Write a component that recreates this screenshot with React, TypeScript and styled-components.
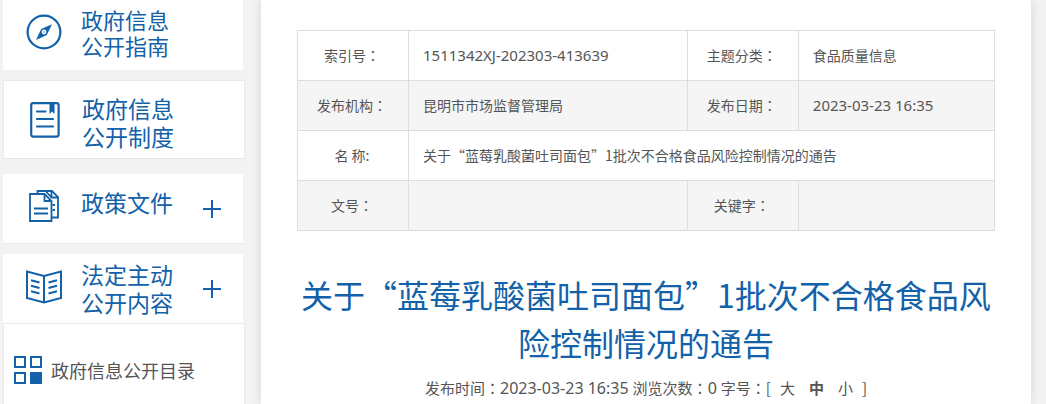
import React from "react";
import styled, { createGlobalStyle } from "styled-components";

const BLUE = "#1261a9";

const GlobalStyle = createGlobalStyle`
  * { box-sizing: border-box; }
  body {
    margin: 0;
    background: #f3f3f3;
    color: #555;
    font-family: "Noto Sans CJK SC", "Noto Sans", sans-serif;
    font-size: 14px;
  }
`;

const Page = styled.div`
  display: flex;
  gap: 16px;
  min-height: 100vh;
  padding: 0 15px 0 3px;
`;

const Sidebar = styled.nav`
  display: flex;
  flex-direction: column;
  flex: 0 0 242px;
`;

const cardStyles = `
  display: grid;
  grid-template-columns: 78px 1fr 40px;
  align-items: center;
  width: 240px;
  border: 0;
  background: #fff;
  color: ${BLUE};
  font-family: inherit;
  text-align: left;
  text-decoration: none;
  padding: 0;
  cursor: pointer;
`;

const CardLink = styled.a<{ $outlined?: boolean }>`
  ${cardStyles}
  height: ${(p) => (p.$outlined ? 79 : 70)}px;
  width: ${(p) => (p.$outlined ? 242 : 240)}px;
  margin-bottom: ${(p) => (p.$outlined ? 15 : 10)}px;
  padding-bottom: ${(p) => (p.$outlined ? 0 : 6)}px;
  border: ${(p) => (p.$outlined ? "1px solid #e8e8e8" : "0")};
`;

const CardButton = styled.button<{ $last?: boolean }>`
  ${cardStyles}
  height: 70px;
  margin-bottom: ${(p) => (p.$last ? 0 : 10)}px;
  border-bottom: 1px solid #e8e8e8;
`;

const IconBox = styled.span<{ $raise?: number }>`
  display: flex;
  justify-content: center;
  padding: 0 4px ${(p) => p.$raise ?? 0}px 8px;
  svg { display: block; }
`;

const CardText = styled.span<{ $small?: boolean; $raise?: number; $drop?: number }>`
  font-size: ${(p) => (p.$small ? 22 : 23)}px;
  line-height: ${(p) => (p.$small ? 26 : 28)}px;
  padding-top: ${(p) => p.$drop ?? 0}px;
  padding-bottom: ${(p) => p.$raise ?? 0}px;
`;

const Line = styled.span`
  display: block;
`;

const Plus = styled.svg`
  display: block;
`;

const SubMenu = styled.ul`
  flex: 1;
  margin: 0;
  padding: 32px 10px 16px;
  list-style: none;
  background: #fff;
  border: 1px solid #e8e8e8;
  border-width: 0 1px;
`;

const SubLink = styled.a`
  display: flex;
  align-items: center;
  gap: 9px;
  color: #555;
  font-size: 18px;
  line-height: 28px;
  text-decoration: none;
`;

const Main = styled.main`
  flex: 1;
  min-width: 0;
  padding: 30px 36px 0;
  background: #fff;
  box-shadow: 0 0 10px rgba(0, 0, 0, 0.12);
`;

const InfoTable = styled.table`
  width: 100%;
  border-collapse: collapse;
  table-layout: fixed;
  tr:nth-child(even) { background: #f5f5f5; }
`;

const LabelCol = styled.col`
  width: 111px;
`;

const ValueCol = styled.col`
  width: 40%;
`;

const HeadCell = styled.th`
  height: 50px;
  padding: 0 2px 2px 0;
  border: 1px solid #ddd;
  font-weight: 400;
  line-height: 20px;
  text-align: center;
`;

const Cell = styled.td`
  height: 50px;
  padding: 0 14px 2px;
  border: 1px solid #ddd;
  line-height: 20px;
`;

const Num = styled.span<{ $size: number }>`
  font-family: "Noto Sans", sans-serif;
  font-size: ${(p) => p.$size}px;
`;

const ColonMark = styled.span`
  font-family: "Noto Sans CJK TC", sans-serif;
`;

const Colon = () => <ColonMark lang="zh-TW">：</ColonMark>;

const Title = styled.h1`
  margin: 39px 0 0;
  color: ${BLUE};
  font-size: 32px;
  font-weight: 400;
  line-height: 48px;
  text-align: center;
`;

const Meta = styled.div`
  display: flex;
  flex-wrap: wrap;
  align-items: baseline;
  justify-content: center;
  gap: 4px;
  margin-top: 10px;
  font-size: 15px;
  line-height: 24px;
`;

const SizeGroup = styled.span`
  display: inline-flex;
  align-items: baseline;
  gap: 9px;
`;

const SizeButtons = styled.span`
  display: inline-flex;
  gap: 14px;
`;

const SizeButton = styled.button<{ $active?: boolean }>`
  padding: 0;
  border: 0;
  background: none;
  color: inherit;
  font-family: inherit;
  font-size: 15px;
  font-weight: ${(p) => (p.$active ? 700 : 400)};
  line-height: 24px;
  cursor: pointer;
`;

const CompassIcon = () => (
  <svg width="36" height="36" viewBox="0 0 36 36" fill="none" stroke={BLUE}>
    <circle cx="18" cy="18" r="16.4" strokeWidth="2.2" />
    <path d="M26 10.2 20.8 21 10 26l5.2-11z" fill={BLUE} stroke="none" />
    <circle cx="18" cy="18" r="2.4" fill="#fff" stroke="none" />
    <circle cx="18" cy="18" r="0.7" fill={BLUE} stroke="none" />
  </svg>
);

const NotebookIcon = () => (
  <svg width="30" height="36" viewBox="0 0 30 36" fill="none" stroke={BLUE} strokeWidth="2.2">
    <rect x="1.2" y="1.2" width="27.4" height="33.4" rx="2" />
    <path d="M19.500 2h5v10l-2.500-2.500-2.500 2.500z" fill={BLUE} stroke="none" />
    <path d="M7 9.5h8.500M7 17h16M7 24.500h16" strokeLinecap="round" />
  </svg>
);

const FilesIcon = () => (
  <svg width="30" height="32" viewBox="0 0 30 32" fill="none" stroke={BLUE} strokeWidth="1.800">
    <path d="M1 4h14.500L22.500 11v20H1z" />
    <path d="M15.500 4v7h7" />
    <path d="M8.500 4V1h14.500l6 6v20.500h-6.500" />
    <path d="M22.500 1v6.500H29M17 1.500l5.500 6" />
    <path d="M5 18.500h14M5 23.500h14M23.500 15h2.500M23.500 20h2.500" />
  </svg>
);

const BookIcon = () => (
  <svg width="36" height="34" viewBox="0 0 36 34" fill="none" stroke={BLUE} strokeWidth="2">
    <path d="M18 6 1 1.500v26.500l17 4.500 17-4.500V1.500z" />
    <path d="M18 6v26.500" />
    <path d="m5 10.200 8.500 2.300M5 15.700l8.500 2.300M5 21.200l8.500 2.300M31 10.200l-8.500 2.300M31 15.700l-8.500 2.300M31 21.200l-8.500 2.300" />
  </svg>
);

const GridIcon = () => (
  <svg width="28" height="28" viewBox="0 0 28 28" fill="none" stroke={BLUE} strokeWidth="2">
    <rect x="1" y="1" width="10" height="10" />
    <rect x="17" y="1" width="10" height="10" />
    <rect x="1" y="17" width="10" height="10" />
    <rect x="17" y="17" width="10" height="10" fill={BLUE} />
  </svg>
);

const PlusIcon = () => (
  <Plus width="18" height="18" viewBox="0 0 18 18" stroke={BLUE} strokeWidth="2" aria-hidden="true">
    <path d="M9 0v18M0 9h18" />
  </Plus>
);

export default function App() {
  return (
    <>
      <GlobalStyle />
      <Page lang="zh-CN">
        <Sidebar>
          <CardLink href="#guide">
            <IconBox><CompassIcon /></IconBox>
            <CardText $small><Line>政府信息</Line><Line>公开指南</Line></CardText>
          </CardLink>
          <CardLink href="#system" $outlined>
            <IconBox><NotebookIcon /></IconBox>
            <CardText $drop={4}><Line>政府信息</Line><Line>公开制度</Line></CardText>
          </CardLink>
          <CardButton type="button">
            <IconBox $raise={6}><FilesIcon /></IconBox>
            <CardText $raise={14}>政策文件</CardText>
            <PlusIcon />
          </CardButton>
          <CardButton type="button" $last aria-expanded="true">
            <IconBox $raise={4}><BookIcon /></IconBox>
            <CardText $raise={2}><Line>法定主动</Line><Line>公开内容</Line></CardText>
            <PlusIcon />
          </CardButton>
          <SubMenu>
            <li>
              <SubLink href="#catalog"><GridIcon />政府信息公开目录</SubLink>
            </li>
          </SubMenu>
        </Sidebar>
        <Main>
          <InfoTable>
            <colgroup>
              <LabelCol />
              <ValueCol />
              <LabelCol />
              <col />
            </colgroup>
            <tbody>
              <tr>
                <HeadCell scope="row">索引号<Colon /></HeadCell>
                <Cell><Num $size={15}>1511342XJ-202303-413639</Num></Cell>
                <HeadCell scope="row">主题分类<Colon /></HeadCell>
                <Cell>食品质量信息</Cell>
              </tr>
              <tr>
                <HeadCell scope="row">发布机构<Colon /></HeadCell>
                <Cell>昆明市市场监督管理局</Cell>
                <HeadCell scope="row">发布日期<Colon /></HeadCell>
                <Cell><Num $size={15}>2023-03-23 16:35</Num></Cell>
              </tr>
              <tr>
                <HeadCell scope="row">名 称:</HeadCell>
                <Cell colSpan={3}>关于“蓝莓乳酸菌吐司面包”1批次不合格食品风险控制情况的通告</Cell>
              </tr>
              <tr>
                <HeadCell scope="row">文号<Colon /></HeadCell>
                <Cell />
                <HeadCell scope="row">关键字<Colon /></HeadCell>
                <Cell />
              </tr>
            </tbody>
          </InfoTable>
          <Title>关于“蓝莓乳酸菌吐司面包”1批次不合格食品风险控制情况的通告</Title>
          <Meta>
            <span>发布时间<Colon /><Num $size={16}>2023-03-23 16:35</Num></span>
            <span>浏览次数<Colon /><Num $size={16}>0</Num></span>
            <SizeGroup>
              <span>字号<Colon />[</span>
              <SizeButtons>
                <SizeButton type="button">大</SizeButton>
                <SizeButton type="button" $active>中</SizeButton>
                <SizeButton type="button">小</SizeButton>
              </SizeButtons>
              <span>]</span>
            </SizeGroup>
          </Meta>
        </Main>
      </Page>
    </>
  );
}
